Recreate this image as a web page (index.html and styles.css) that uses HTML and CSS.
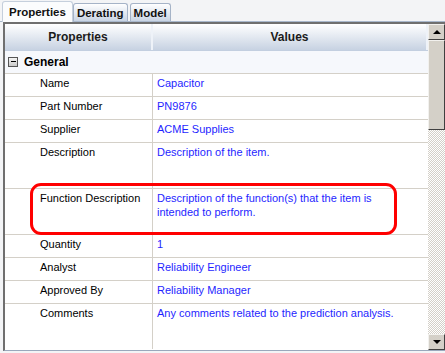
FILE: index.html
```html
<!DOCTYPE html>
<html lang="en">
<head>
    <meta charset="UTF-8">
    <title>Properties</title>
    <link rel="stylesheet" href="styles.css">
</head>
<body>
    <div class="page">
        <div class="tabs">
            <div class="tab active">Properties</div>
            <div class="tab">Derating</div>
            <div class="tab">Model</div>
        </div>
        <div class="frame">
            <div class="grid">
                <div class="head">
                    <div class="hcell">Properties</div>
                    <div class="hcell">Values</div>
                </div>
                <div class="group">
                    <span class="toggle"></span>
                    <span class="group-name">General</span>
                </div>
                <div class="row">
                    <div class="label">Name</div>
                    <div class="value">Capacitor</div>
                </div>
                <div class="row">
                    <div class="label">Part Number</div>
                    <div class="value">PN9876</div>
                </div>
                <div class="row">
                    <div class="label">Supplier</div>
                    <div class="value">ACME Supplies</div>
                </div>
                <div class="row tall">
                    <div class="label">Description</div>
                    <div class="value">Description of the item.</div>
                </div>
                <div class="row tall">
                    <div class="label">Function Description</div>
                    <div class="value">Description of the function(s) that the item is intended to perform.</div>
                </div>
                <div class="row">
                    <div class="label">Quantity</div>
                    <div class="value">1</div>
                </div>
                <div class="row">
                    <div class="label">Analyst</div>
                    <div class="value">Reliability Engineer</div>
                </div>
                <div class="row">
                    <div class="label">Approved By</div>
                    <div class="value">Reliability Manager</div>
                </div>
                <div class="row tall last">
                    <div class="label">Comments</div>
                    <div class="value">Any comments related to the prediction analysis.</div>
                </div>
            </div>
            <div class="scrollbar">
                <div class="sb-btn"><span class="arrow up"></span></div>
                <div class="sb-track">
                    <div class="sb-thumb"></div>
                </div>
                <div class="sb-btn"><span class="arrow down"></span></div>
            </div>
        </div>
        <div class="highlight"></div>
    </div>
</body>
</html>
```

FILE: styles.css
```css
body {
    margin: 0;
    background-color: #f3f4f6;
    font-family: "Liberation Sans", Arial, sans-serif;
    font-size: 11px;
    color: #000;
}
.page {
    position: relative;
    width: 445px;
    height: 353px;
}
.tabs {
    display: flex;
    align-items: flex-end;
    height: 21px;
    padding-left: 2px;
    border-bottom: 1px solid #a9b8cc;
}
.tab {
    height: 17px;
    padding: 0 3px;
    margin-right: 2px;
    line-height: 18px;
    font-weight: bold;
    font-size: 11.5px;
    color: #111;
    border: 1px solid #a5b3c7;
    border-bottom: none;
    border-radius: 3px 3px 0 0;
    background: linear-gradient(#ffffff, #c9d4e4);
}
.tab.active {
    height: 20px;
    line-height: 20px;
    padding: 0 6px;
    margin-right: 0;
    margin-bottom: -1px;
    background: #fbfcfd;
    border-color: #c5cfdc;
}
.frame {
    display: flex;
    margin-left: 3px;
    width: 440px;
    height: 326px;
    border-top: 2px solid #6f6f6f;
    border-left: 2px solid #6f6f6f;
    border-right: 1px solid #9aa8bc;
    border-bottom: 1px solid #9aa8bc;
    background: #fff;
}
.grid {
    flex: 1;
}
.head {
    display: grid;
    grid-template-columns: 148px 1fr;
    height: 26px;
    border-bottom: 1px solid #c3cfe0;
    background: linear-gradient(#ffffff, #c7d2e2);
}
.hcell {
    display: flex;
    align-items: center;
    justify-content: center;
    font-weight: bold;
    font-size: 12px;
    color: #1b1b1b;
    border-right: 2px solid #eef2f8;
}
.group {
    display: flex;
    align-items: center;
    height: 22px;
    padding-left: 3px;
    background: #f6f8fc;
    border-bottom: 1px solid #d4d0c8;
}
.toggle {
    position: relative;
    width: 8px;
    height: 8px;
    border: 1px solid #555;
    background: linear-gradient(#f4f4f4, #c8c8c8);
}
.toggle::after {
    content: "";
    position: absolute;
    left: 2px;
    top: 3px;
    width: 5px;
    height: 1px;
    background: #000;
}
.group-name {
    margin-left: 6px;
    font-weight: bold;
    font-size: 12px;
}
.row {
    display: grid;
    grid-template-columns: 148px 1fr;
    height: 22px;
    border-bottom: 1px solid #d4d0c8;
}
.row.tall {
    height: 45px;
}
.row.last {
    border-bottom: none;
}
.label {
    padding: 2px 0 0 35px;
    border-right: 1px solid #d4d0c8;
    line-height: 14px;
}
.value {
    padding: 2px 20px 0 4px;
    color: #1f1fff;
    line-height: 14px;
}
.scrollbar {
    display: flex;
    flex-direction: column;
    width: 17px;
    background: #d4d0c8;
}
.sb-btn {
    display: flex;
    align-items: center;
    justify-content: center;
    height: 16px;
    box-sizing: border-box;
    background: #d4d0c8;
    border: 1px solid;
    border-color: #f2f1ee #404040 #404040 #f2f1ee;
}
.arrow {
    width: 0;
    height: 0;
    border-left: 4px solid transparent;
    border-right: 4px solid transparent;
}
.arrow.up {
    border-bottom: 4px solid #000;
}
.arrow.down {
    border-top: 4px solid #000;
}
.sb-track {
    flex: 1;
    background: repeating-conic-gradient(#d4d0c8 0 25%, #ffffff 0 50%) 0 0 / 2px 2px;
}
.sb-thumb {
    height: 90px;
    box-sizing: border-box;
    background: #d4d0c8;
    border: 1px solid;
    border-color: #f2f1ee #404040 #404040 #f2f1ee;
}
.highlight {
    position: absolute;
    left: 30px;
    top: 183px;
    width: 361px;
    height: 46px;
    border: 3px solid #f00;
    border-radius: 11px;
}
```
